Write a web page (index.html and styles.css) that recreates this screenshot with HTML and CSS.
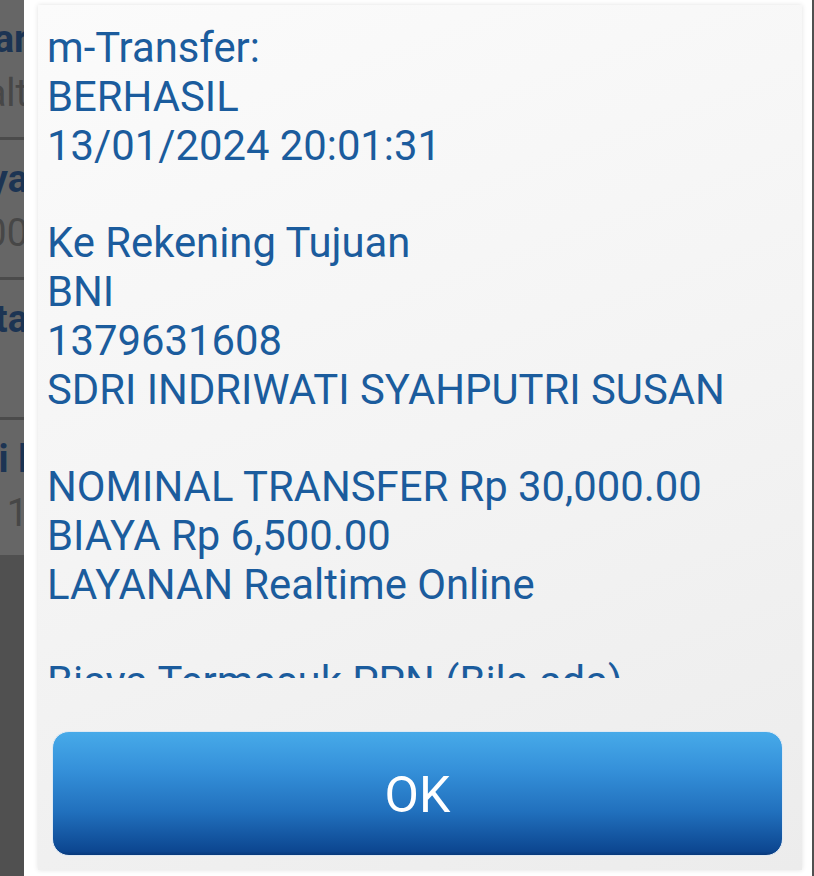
FILE: index.html
```html
<!DOCTYPE html>
<html lang="id">
<head>
<meta charset="utf-8">
<title>m-Transfer</title>
<link rel="stylesheet" href="styles.css">
</head>
<body>
<div class="page">
  <div class="list">
    <div class="row">
      <div class="line bold">Daftar</div>
      <div class="line sub">Realt</div>
    </div>
    <div class="row">
      <div class="line bold">Biaya</div>
      <div class="line sub">6,500.00</div>
    </div>
    <div class="row">
      <div class="line bold">Berita</div>
      <div class="line sub"></div>
    </div>
    <div class="row last">
      <div class="line bold">Bukti l</div>
      <div class="line sub">1</div>
    </div>
    <div class="rest"></div>
  </div>
</div>

<div class="dialog">
  <div class="panel">
    <div class="msg-clip">
      <div class="msg">
        <div>m-Transfer:</div>
        <div>BERHASIL</div>
        <div>13/01/2024 20:01:31</div>
        <div class="gap">&nbsp;</div>
        <div>Ke Rekening Tujuan</div>
        <div>BNI</div>
        <div>1379631608</div>
        <div>SDRI INDRIWATI SYAHPUTRI SUSAN</div>
        <div class="gap">&nbsp;</div>
        <div>NOMINAL TRANSFER Rp 30,000.00</div>
        <div>BIAYA Rp 6,500.00</div>
        <div>LAYANAN Realtime Online</div>
        <div class="gap">&nbsp;</div>
        <div>Biaya Termasuk PPN (Bila ada)</div>
      </div>
    </div>
    <button class="ok" type="button">OK</button>
  </div>
</div>
</body>
</html>
```
FILE: styles.css
```css
* { box-sizing: border-box; }

html, body {
  margin: 0;
  padding: 0;
  width: 814px;
  height: 876px;
  overflow: hidden;
}

body {
  background: #505050;
  font-family: "Roboto", "Liberation Sans", sans-serif;
  position: relative;
}

.page {
  width: 814px;
  height: 876px;
}

.list {
  width: 28px;
  height: 876px;
  overflow: hidden;
  display: flex;
  flex-direction: column;
}

.row {
  height: 140px;
  background: #666666;
  border-bottom: 3px solid #4b4b4b;
  padding-top: 19px;
  display: flex;
  flex-direction: column;
}

.row.last {
  height: 135px;
  border-bottom: none;
}

.line {
  display: flex;
  justify-content: flex-end;
  white-space: nowrap;
  font-size: 38px;
  line-height: 40px;
  height: 40px;
}

.line.bold {
  font-weight: 700;
  color: #1c3453;
}

.line.sub {
  margin-top: 14px;
  color: #474747;
}

.rest {
  flex: 1;
  background: #505050;
}

.dialog {
  position: absolute;
  left: 24px;
  top: 0;
  width: 788px;
  height: 876px;
  background: #ffffff;
  padding: 5px 10px 6px 14px;
}

.panel {
  height: 100%;
  background: linear-gradient(160deg, #fbfbfb 0%, #f4f4f4 50%, #ececec 100%);
  box-shadow: 0 0 5px rgba(0, 0, 0, 0.12);
  padding: 19px 19px 14px 14px;
  display: flex;
  flex-direction: column;
}

.msg-clip {
  height: 654px;
  overflow: hidden;
  margin-left: -5px;
}

.msg {
  font-size: 41.8px;
  line-height: 48.8px;
  color: #1b5c9d;
  white-space: nowrap;
}

.ok {
  margin-top: 53px;
  height: 125px;
  width: 100%;
  border: 1px solid #dfe9f3;
  border-radius: 17px;
  background: linear-gradient(180deg, #47aae9 0%, #3591da 30%, #2170bd 65%, #0c4690 97%, #08397a 100%);
  color: #ffffff;
  font-family: "Roboto", "Liberation Sans", sans-serif;
  font-size: 50px;
  line-height: 1;
  padding: 2px 0 0 0;
  display: flex;
  align-items: center;
  justify-content: center;
  cursor: pointer;
}
```
